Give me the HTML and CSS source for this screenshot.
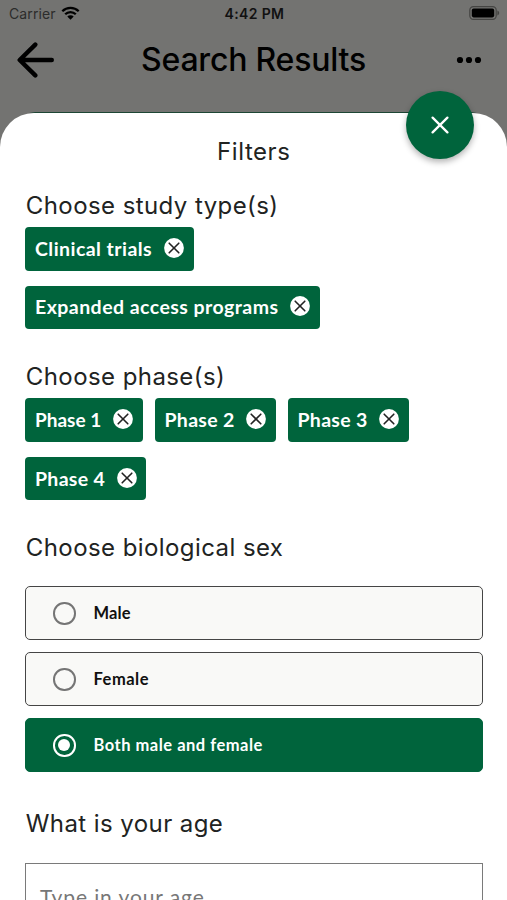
FILE: index.html
```html
<!DOCTYPE html>
<html lang="en">
<head>
<meta charset="utf-8">
<title>Search Results</title>
<link rel="stylesheet" href="styles.css">
</head>
<body>
<svg class="defs" width="0" height="0" aria-hidden="true">
  <symbol id="remove" viewBox="0 0 20 20"><circle cx="10" cy="10" r="9.9" fill="#fff"/><path d="M5.2 5.2l9.6 9.6M14.8 5.2l-9.6 9.6" stroke="#222" stroke-width="1.6" stroke-linecap="round"/></symbol>
</svg>
<div class="screen">
  <div class="status">
    <div class="carrier"><span class="carrier-name">Carrier</span>
      <svg width="19" height="14" viewBox="0 0 18 14"><g fill="none" stroke="#000" stroke-width="2.3"><path d="M.8 5.2a11.7 11.7 0 0 1 16.4 0"/><path d="M3.7 8.3a7.5 7.5 0 0 1 10.6 0"/></g><path d="M5.8 10.5a4.5 4.5 0 0 1 6.4 0L9 13.7z"/></svg>
    </div>
    <span class="clock">4:42 PM</span>
    <svg class="battery" width="31" height="14" viewBox="0 0 31 14"><rect x=".8" y=".6" width="26.4" height="12.8" rx="3.6" fill="none" stroke="#454543" stroke-width="1.2"/><rect x="2.8" y="2.6" width="22.4" height="8.8" rx="1.8"/><path d="M28.4 4.6c2.4.8 2.4 4 0 4.8z" fill="#454543"/></svg>
  </div>
  <header class="topbar">
    <svg class="back" width="38" height="38" viewBox="0 0 38 38"><path d="M18.3 3.6L2.7 19l15.6 15.4M3.2 19h31.6" fill="none" stroke="#000" stroke-width="4.4" stroke-linecap="round" stroke-linejoin="round"/></svg>
    <h1 class="title">Search Results</h1>
    <svg class="more" width="26" height="8" viewBox="0 0 26 8"><circle cx="4" cy="4" r="3.1"/><circle cx="13" cy="4" r="3.1"/><circle cx="22" cy="4" r="3.1"/></svg>
  </header>
  <main class="sheet">
    <button class="close" aria-label="Close"><svg width="18" height="18" viewBox="0 0 18 18"><path d="M1.6 1.6l14.8 14.8M16.4 1.6L1.6 16.4" stroke="#fff" stroke-width="2.3" stroke-linecap="round"/></svg></button>
    <h2 class="sheet-title">Filters</h2>
    <section class="group">
      <h3 class="heading">Choose study type(s)</h3>
      <div class="chips">
        <div class="chip"><span class="chip-text clinical">Clinical trials</span><svg class="x"><use href="#remove"/></svg></div>
        <div class="chip"><span class="chip-text expanded">Expanded access programs</span><svg class="x"><use href="#remove"/></svg></div>
      </div>
    </section>
    <section class="group">
      <h3 class="heading">Choose phase(s)</h3>
      <div class="chips">
        <div class="chip"><span class="chip-text phase-narrow">Phase 1</span><svg class="x"><use href="#remove"/></svg></div>
        <div class="chip"><span class="chip-text phase">Phase 2</span><svg class="x"><use href="#remove"/></svg></div>
        <div class="chip"><span class="chip-text phase">Phase 3</span><svg class="x"><use href="#remove"/></svg></div>
        <div class="chip"><span class="chip-text phase">Phase 4</span><svg class="x"><use href="#remove"/></svg></div>
      </div>
    </section>
    <section class="group">
      <h3 class="heading">Choose biological sex</h3>
      <div class="options">
        <div class="option"><span class="radio"></span><span class="male">Male</span></div>
        <div class="option"><span class="radio"></span><span>Female</span></div>
        <div class="option selected"><span class="radio"></span><span>Both male and female</span></div>
      </div>
    </section>
    <section class="group age">
      <h3 class="heading">What is your age</h3>
      <div class="field"><span>Type in your age</span></div>
    </section>
  </main>
</div>
</body>
</html>
```
FILE: styles.css
```css
* { box-sizing: border-box; }
body { margin: 0; font-family: Inter, "Liberation Sans", sans-serif; color: #212322; }
.defs { display: block; }
.screen { height: 900px; overflow: hidden; background: #737371; display: flex; flex-direction: column; }
.status { height: 28px; display: grid; grid-template-columns: 1fr auto 1fr; align-items: center; padding: 0 7px 1px 9px; flex: none; font-size: 14px; color: #111; }
.carrier { display: flex; align-items: center; gap: 6px; color: #2c2c2b; }
.carrier svg { margin: -2px 0 0 -1px; }
.carrier-name { letter-spacing: .1px; }
.clock { font-weight: 600; letter-spacing: .35px; }
.battery { justify-self: end; margin-top: -1px; }
.topbar { height: 85px; flex: none; display: grid; grid-template-columns: 76px 1fr 76px; padding: 13px 0 0 0; align-items: start; border-bottom: 1px solid #2e4c3e; border-image: linear-gradient(90deg, transparent 30px, #1c4634 36px, #1c4634 470px, transparent 476px) 1; }
.back { margin-left: 17px; }
.title { margin: 0; text-align: center; font-size: 32px; line-height: 38px; font-weight: 500; color: #000; letter-spacing: -.22px; white-space: nowrap; }
.more { margin: 15px 0 0 24.5px; }
.sheet { position: relative; flex: 1 0 auto; background: #fff; border-radius: 34px 34px 0 0; padding: 23px 24.5px 0 25px; }
.close { position: absolute; top: -22px; right: 33px; width: 68px; height: 68px; border: 0; border-radius: 50%; background: #00643c; display: grid; place-items: center; padding: 0; box-shadow: 0 3px 6px rgba(0,0,0,.3); }
.sheet-title { margin: 0; text-align: center; font-size: 24px; line-height: 32px; font-weight: 400; letter-spacing: .55px; }
.group { margin-top: 22px; }
.group + .group { margin-top: 32px; }
.heading { margin: 0; padding-left: .8px; font-size: 24px; line-height: 32px; font-weight: 400; letter-spacing: .42px; white-space: nowrap; }
.chips { display: flex; flex-wrap: wrap; gap: 15px 12px; padding-top: 5px; }
.chip { height: 43.6px; border-radius: 4px; background: #00643c; color: #fff; display: flex; align-items: center; padding: 0 9.5px 0 10px; gap: 12px; }
.chip-text { font-family: Lato, sans-serif; font-weight: 700; font-size: 19.5px; line-height: 24px; letter-spacing: .45px; white-space: nowrap; }
.x { width: 20px; height: 20px; margin-bottom: 2px; }
.clinical { width: 117px; }
.expanded { width: 243px; }
.phase-narrow { width: 66px; font-size: 19px; letter-spacing: 0; }
.phase { width: 69.5px; letter-spacing: .3px; }
.options { display: grid; gap: 12px; padding-top: 22px; }
.option { height: 54px; border: 1.5px solid #454545; border-radius: 5px; background: #f9f9f7; display: flex; align-items: center; gap: 18px; padding-left: 27px; font-family: Lato, sans-serif; font-size: 16.5px; font-weight: 700; letter-spacing: .5px; color: #111; }
.male { letter-spacing: .15px; }
.radio { width: 22.5px; height: 22.5px; border: 2px solid #757575; border-radius: 50%; display: grid; place-items: center; }
.selected { background: #00643c; border-color: #00643c; color: #fff; }
.selected .radio { border-color: #fff; }
.selected .radio::after { content: ""; width: 12px; height: 12px; border-radius: 50%; background: #fff; }
.group + .group.age { margin-top: 36px; }
.field { margin-top: 23px; height: 70px; border: 1.5px solid #7a7a7a; padding: 19px 14px; font-family: Lato, sans-serif; font-size: 21px; line-height: 28px; letter-spacing: .9px; color: #777; }
```
